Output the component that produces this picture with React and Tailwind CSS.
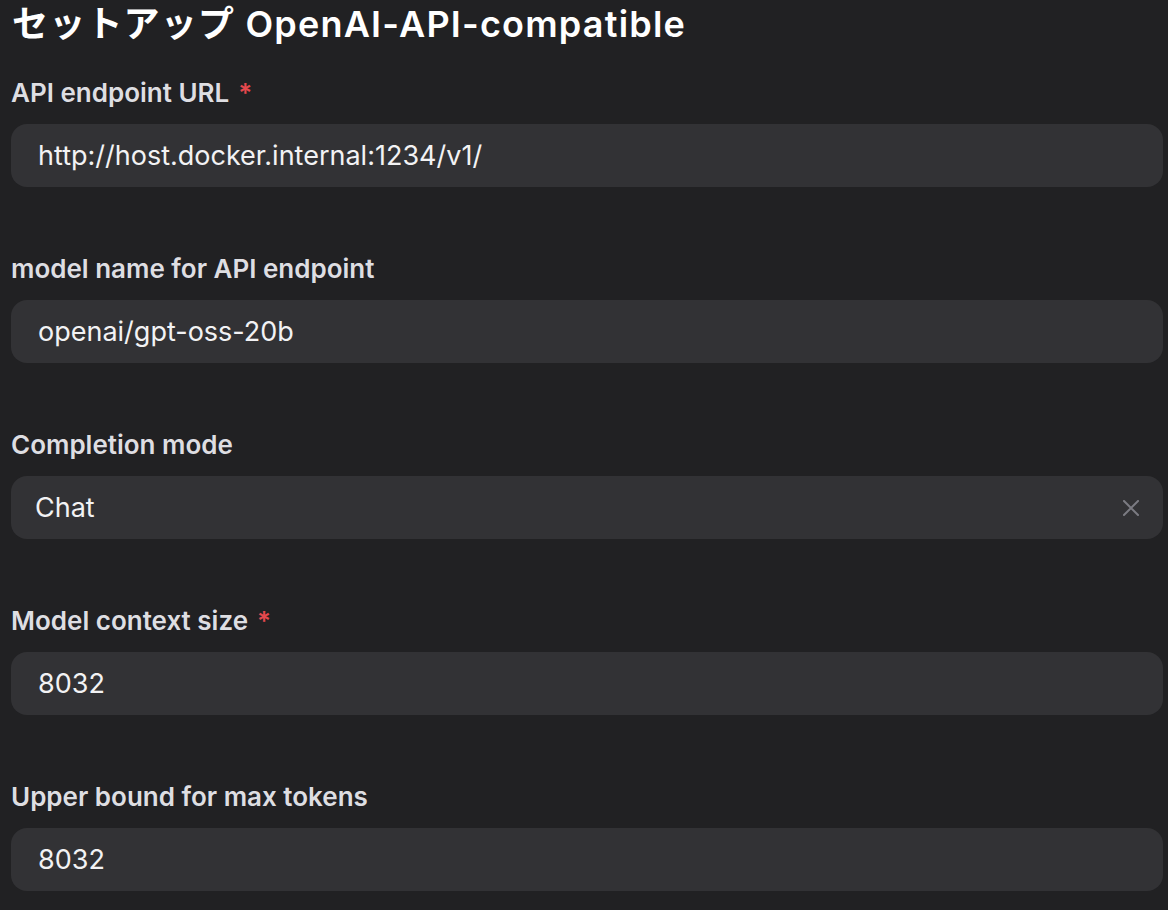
import React from 'react';

const fields = [
  { label: 'API endpoint URL', required: true, value: 'http://host.docker.internal:1234/v1/' },
  { label: 'model name for API endpoint', value: 'openai/gpt-oss-20b' },
  { label: 'Completion mode', value: 'Chat', select: true },
  { label: 'Model context size', required: true, value: '8032' },
  { label: 'Upper bound for max tokens', value: '8032' },
];

function Field({ label, required, value, select }) {
  return (
    <div className="flex flex-col mb-[66px]">
      <label className="text-[26px] leading-[32px] font-semibold text-[#dedee2] mb-[15px]">
        {label}
        {required && <span className="text-[#e5484d] ml-[9px]">*</span>}
      </label>
      <div
        className={`h-[63px] rounded-[16px] bg-[#323235] flex items-center justify-between text-[27px] text-[#f2f2f4] pt-[2px] ${
          select ? 'pl-[24px] pr-[24px]' : 'pl-[27px] pr-[24px]'
        }`}
      >
        <span>{value}</span>
        {select && (
          <svg width="16" height="16" viewBox="0 0 16 16" className="text-[#7b7b82] -mt-[2px]">
            <path d="M1 1L15 15M15 1L1 15" stroke="currentColor" strokeWidth="2" strokeLinecap="square" />
          </svg>
        )}
      </div>
    </div>
  );
}

export default function App() {
  return (
    <div className="min-h-screen bg-[#212123] pl-[11px] pr-[5px] font-['Inter','Noto_Sans_CJK_JP',sans-serif]">
      <h1 className="text-[36px] leading-[48px] font-semibold tracking-[1.2px] text-white mb-[29px] pl-[1px]">
        セットアップ OpenAI-API-compatible
      </h1>
      {fields.map((f) => (
        <Field key={f.label} {...f} />
      ))}
    </div>
  );
}
